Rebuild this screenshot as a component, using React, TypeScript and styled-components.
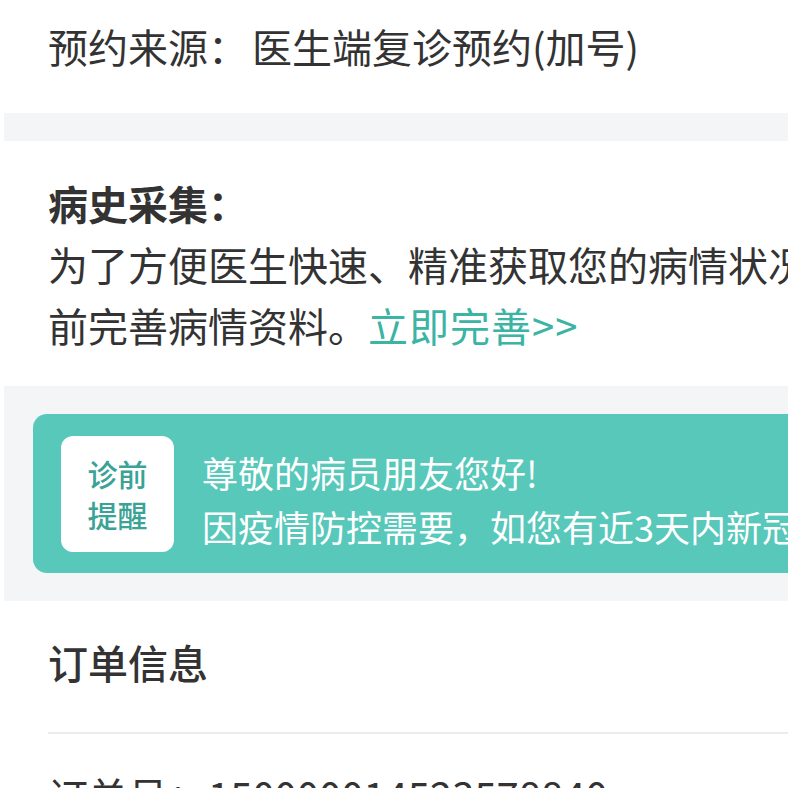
import React from "react";
import styled, { createGlobalStyle } from "styled-components";

const Global = createGlobalStyle`
  html, body { margin: 0; padding: 0; background: #ffffff; }
  body { overflow: hidden; font-family: "Noto Sans CJK SC", "Noto Sans", sans-serif; color: #333333; }
`;

const Viewport = styled.div`
  width: 788px;
  height: 788px;
  overflow: hidden;
  background: #ffffff;
  padding-left: 4px;
  box-sizing: border-box;
`;

const Page = styled.div`
  width: 1100px;
  display: flex;
  flex-direction: column;
`;

const WhiteSection = styled.section<{ $top: number; $bottom: number }>`
  background: #ffffff;
  padding: ${(p) => p.$top}px 44px ${(p) => p.$bottom}px;
`;

const GraySpacer = styled.div<{ $h: number }>`
  height: ${(p) => p.$h}px;
  background: #f4f5f7;
`;

const Line = styled.div<{ $lh?: number; $weight?: number }>`
  font-size: 40px;
  line-height: ${(p) => p.$lh ?? 60}px;
  font-weight: ${(p) => p.$weight ?? 400};
  color: #333333;
  white-space: nowrap;
`;

const Value = styled.span<{ $gap: number }>`
  margin-left: ${(p) => p.$gap}px;
`;

const Link = styled.span`
  color: #3bb4a4;
  letter-spacing: 1px;
`;

const NoticeArea = styled.div`
  background: #f4f5f7;
  padding: 28px 0 28px 29px;
`;

const NoticeCard = styled.div`
  background: #57c8ba;
  border-radius: 14px;
  height: 159px;
  box-sizing: border-box;
  padding: 22px 28px 21px 28px;
  display: flex;
  align-items: flex-start;
  gap: 28px;
  overflow: hidden;
`;

const Badge = styled.div`
  flex: none;
  width: 113px;
  height: 116px;
  background: #ffffff;
  border-radius: 12px;
  display: flex;
  flex-direction: column;
  align-items: center;
  justify-content: center;
  color: #3aa395;
  font-size: 30px;
  line-height: 41px;
  font-weight: 500;
`;

const NoticeText = styled.div`
  padding-top: 9px;
  color: #ffffff;
  font-size: 36px;
  line-height: 54px;
  white-space: nowrap;
`;

const Divider = styled.div`
  height: 2px;
  background: #ececec;
  margin-left: 44px;
`;

export default function App() {
  return (
    <>
      <Global />
      <Viewport>
        <Page>
          <WhiteSection $top={16} $bottom={37}>
            <Line>
              预约来源：<Value $gap={4}>医生端复诊预约(加号)</Value>
            </Line>
          </WhiteSection>
          <GraySpacer $h={28} />
          <WhiteSection $top={32} $bottom={30}>
            <Line $lh={61} $weight={700}>病史采集：</Line>
            <Line $lh={61}>为了方便医生快速、精准获取您的病情状况，请在就诊</Line>
            <Line $lh={61}>
              前完善病情资料。<Link>立即完善&gt;&gt;</Link>
            </Line>
          </WhiteSection>
          <NoticeArea>
            <NoticeCard>
              <Badge>
                <span>诊前</span>
                <span>提醒</span>
              </Badge>
              <NoticeText>
                <div>尊敬的病员朋友您好!</div>
                <div>因疫情防控需要，如您有近3天内新冠肺炎相关症状</div>
              </NoticeText>
            </NoticeCard>
          </NoticeArea>
          <WhiteSection $top={31} $bottom={40}>
            <Line $weight={500}>订单信息</Line>
          </WhiteSection>
          <Divider />
          <WhiteSection $top={31} $bottom={20}>
            <Line>
              订单号：<Value $gap={0}>150000014523578840</Value>
            </Line>
          </WhiteSection>
        </Page>
      </Viewport>
    </>
  );
}
